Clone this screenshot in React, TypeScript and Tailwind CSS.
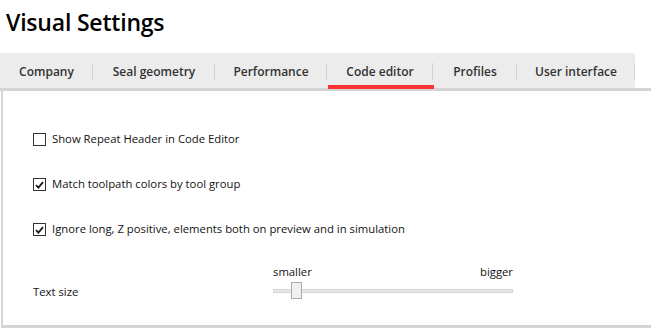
import React from "react";

const tabs = [
  { label: "Company", w: "w-[93px]" },
  { label: "Seal geometry", w: "w-[122px]" },
  { label: "Performance", w: "w-[112px]" },
  { label: "Code editor", w: "w-[106px]" },
  { label: "Profiles", w: "w-[84px]" },
  { label: "User interface", w: "w-[118px]" },
];
const active = "Code editor";

const options = [
  { label: "Show Repeat Header in Code Editor", checked: false },
  { label: "Match toolpath colors by tool group", checked: true },
  { label: "Ignore long, Z positive, elements both on preview and in simulation", checked: true },
];

function CheckBox({ checked }: { checked: boolean }) {
  return (
    <span className="flex h-[13px] w-[13px] shrink-0 items-center justify-center border border-[#333333] bg-white">
      {checked && (
        <svg width="9" height="8" viewBox="0 0 9 8" aria-hidden>
          <path d="M1 4.2 L3.4 6.6 L8 1.2" fill="none" stroke="#1a1a1a" strokeWidth="1.8" />
        </svg>
      )}
    </span>
  );
}

export default function App() {
  return (
    <div className="h-[335px] w-[651px] overflow-hidden bg-white font-['Segoe_UI','Open_Sans',sans-serif] text-black">
      <h1 className="pl-[6px] pt-[6px] text-[23px] font-semibold leading-[32px] tracking-[-0.2px]">Visual Settings</h1>

      <div className="mt-[15px] border-b-[3px] border-[#d4d4d4]">
        <div className="flex h-[35px] w-[635px] bg-[#ececec]">
          {tabs.map((tab) => (
            <div
              key={tab.label}
              className={`relative flex h-full items-center justify-center whitespace-nowrap pt-[3px] text-[12px] font-semibold text-[#333333] ${tab.w}`}
            >
              {tab.label}
              <span className="absolute right-0 top-[10px] h-[17px] w-px bg-[#d2d2d2]" />
              {tab.label === active && <span className="absolute bottom-[-1px] left-px right-[-1px] h-[4px] bg-[#ff3333]" />}
            </div>
          ))}
        </div>
      </div>

      <div className="ml-px flex h-[237px] flex-col border-b-[3px] border-l-2 border-[#d4d4d4] pl-[30px] pt-[40px] text-[11.3px] text-[#111111]">
        {options.map((o) => (
          <label key={o.label} className="mb-[28px] flex h-[17px] items-center gap-[6px]">
            <CheckBox checked={o.checked} />
            <span>{o.label}</span>
          </label>
        ))}
        <div className="-mt-[2px] flex items-end">
          <span className="mb-[-2px] w-[240px]">Text size</span>
          <div className="flex w-[240px] flex-col">
            <div className="flex justify-between leading-[16px]">
              <span>smaller</span>
              <span>bigger</span>
            </div>
            <div className="relative mt-[2px] flex h-[17px] items-center">
              <div className="h-[4px] w-full border border-[#d6d6d6] bg-[#e7e7e7]" />
              <div className="absolute left-[18px] top-0 h-[17px] w-[11px] border border-[#acacac] bg-[#f0f0f0]" />
            </div>
          </div>
        </div>
      </div>
    </div>
  );
}
